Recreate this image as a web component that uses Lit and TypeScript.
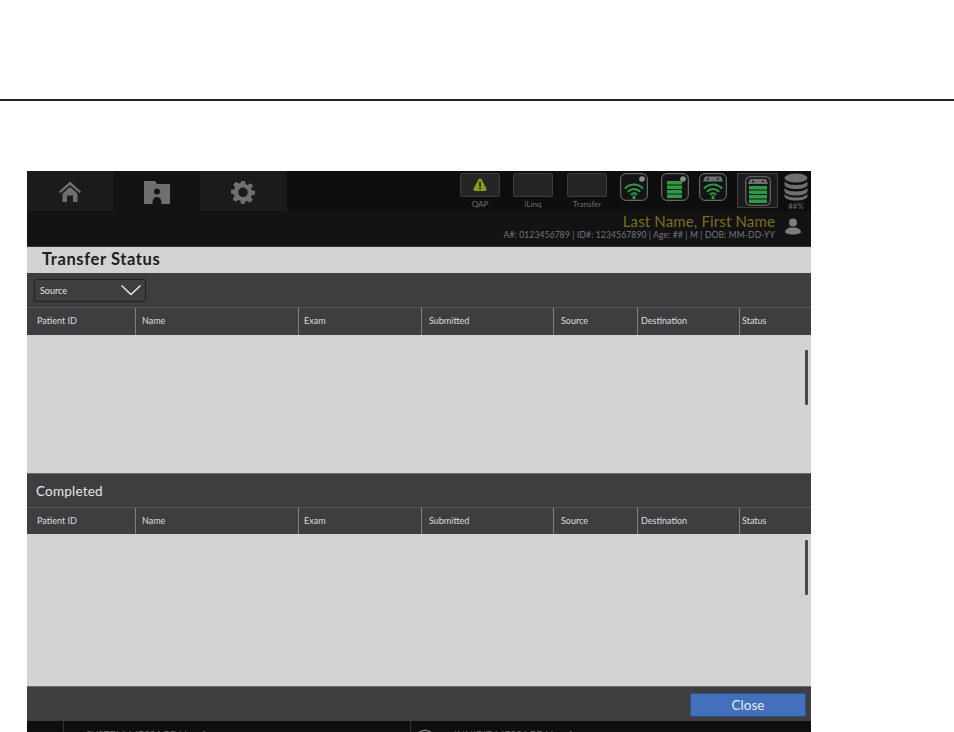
import { LitElement, html, css, svg } from "lit";
import { customElement } from "lit/decorators.js";

const cols = [
  ["Patient ID", 109], ["Name", 163], ["Exam", 123], ["Submitted", 132],
  ["Source", 84], ["Destination", 102], ["Status", 71],
] as const;

const wifi = svg`<g fill="none" stroke="#2f9a45" stroke-width="2" stroke-linecap="round"><path d="M5.500 15a12 12 0 0 1 17 0"/><path d="M8.500 18.300a7.800 7.800 0 0 1 11 0"/><path d="M11.500 21.200a3.600 3.600 0 0 1 5 0"/></g><rect x="12.600" y="22.500" width="2.800" height="3.500" fill="#2f9a45"/>`;
const bars = (x: number, y: number, w: number, n: number, h: number, gap: number) =>
  Array.from({ length: n }, (_, i) => svg`<rect x=${x} y=${y + i * (h + gap)} width=${w} height=${h} fill="#2f9a45"/>`);

@customElement("app-root")
export class AppRoot extends LitElement {
  static styles = css`
    :host { display: block; height: 732px; overflow: hidden; background: #fff; font-family: "Lato", "Liberation Sans", sans-serif; }
    .rule { height: 2px; background: #231f20; margin-top: 99px; }
    .screen { margin: 70px 143px 0 27px; width: 784px; }
    .top { height: 75px; background: #131316; border-bottom: 1px solid #3a3a3c; }
    .bar { display: flex; height: 40px; background: #0e0e0e; }
    .tab { width: 86.5px; height: 40px; box-sizing: border-box; padding-top: 2px; background: #1c1b1b; display: flex; align-items: center; justify-content: center; }
    .tab.on { background: #131316; }
    .status { margin-left: auto; display: flex; padding: 2px 0 0 0; }
    .qbtn { width: 40px; display: flex; flex-direction: column; align-items: center; margin-right: 14px; }
    .qbtn.first { margin-right: 13px; }
    .qbox { width: 40px; height: 24px; box-sizing: border-box; background: #252525; border: 1px solid #3d3d3d; border-radius: 2px; display: flex; align-items: center; justify-content: center; }
    .qlabel { font-size: 8px; line-height: 10px; margin-top: 2px; color: #6e6e6e; }
    .ico { display: block; flex: none; }
    .w1 { margin: 0 13px 0 -1px; }
    .w2 { margin-right: 10px; }
    .w3 { margin-right: 10px; }
    .sel { width: 41px; height: 35px; box-sizing: border-box; border: 1px solid #3f3f3f; background: #1c1c1c; display: flex; justify-content: center; align-items: center; margin-right: 5px; }
    .db { display: flex; flex-direction: column; align-items: center; width: 26px; margin-right: 2px; }
    .pct { font-size: 8px; line-height: 8px; color: #6e6e6e; margin-top: 1px; }
    .patient { display: flex; justify-content: flex-end; align-items: flex-start; height: 35px; padding-right: 8px; }
    .who { text-align: right; margin-right: 8px; }
    .name { font-size: 15px; line-height: 15px; letter-spacing: 0.15px; color: #7d6d1c; margin-top: 3px; }
    .sub { font-size: 8.5px; line-height: 10px; letter-spacing: 0.15px; color: #767676; margin-top: 1px; }
    .person { margin-top: 5px; }
    .title { height: 26px; background: #d2d2d2; color: #1e1e1e; font-size: 16.500px; font-weight: 700; line-height: 25px; padding-left: 15px; letter-spacing: 0.6px; }
    .tools { height: 34px; background: #3e3e40; box-sizing: border-box; padding: 6px 7px; }
    .select { width: 112px; height: 23px; box-sizing: border-box; border: 1px solid #232323; border-radius: 2px; background: #3e3e40; color: #e2e2e2; font-size: 9px; display: flex; align-items: center; justify-content: space-between; padding: 0 3px 1px 5px; }
    .chead { display: flex; height: 28px; background: #3e3e40; border-top: 1px solid #58585a; box-sizing: border-box; }
    .chead.two { height: 27px; }
    .col { box-sizing: border-box; border-right: 1px solid #808082; color: #dcdcdc; font-size: 9px; padding: 0 0 2px 6px; display: flex; align-items: center; }
    .col:last-child { border-right: 0; padding-left: 2px; }
    .col.c0 { padding-left: 10px; }
    .col.c2 { padding-left: 5px; }
    .col.c3 { padding-left: 7px; }
    .col.c4 { padding-left: 7px; }
    .col.c5 { padding-left: 3px; }
    .list { background: #d2d2d2; position: relative; }
    .thumb { position: absolute; right: 3px; width: 3px; height: 55px; background: #48484a; border-radius: 1px; }
    .a { height: 138px; }
    .a .thumb { top: 15px; }
    .b { height: 152px; }
    .b .thumb { top: 6px; }
    .sect { height: 34px; background: #3e3e40; border-top: 1px solid #6a6a6a; box-sizing: border-box; color: #e6e6e6; font-size: 13.500px; line-height: 35px; padding-left: 9px; letter-spacing: 0.2px; }
    .foot { height: 35px; background: #3e3e40; border-top: 1px solid #6a6a6a; box-sizing: border-box; display: flex; justify-content: flex-end; align-items: flex-start; padding: 6px 5px 0 0; }
    .close { width: 116px; height: 24px; box-sizing: border-box; background: #4370bd; border: 1px solid #2f4f86; border-radius: 2px; color: #e8e8e8; font-size: 13.500px; display: flex; align-items: center; justify-content: center; font-family: inherit; padding: 0; }
    .msgs { height: 11px; overflow: hidden; background: #0f0f0e; display: flex; color: #6e6e6e; font-size: 10px; line-height: 11px; letter-spacing: 0.3px; }
    .m1 { width: 348px; margin-left: 36px; border-left: 1px solid #333; border-right: 1px solid #333; box-sizing: border-box; padding: 7.500px 0 0 16px; white-space: nowrap; }
    .m2 { padding: 7.500px 0 0 37px; white-space: nowrap; position: relative; }
    .eye { position: absolute; left: 5px; top: 8px; }
  `;

  private cols(two = false) {
    return html`<div class="chead ${two ? "two" : ""}">
      ${cols.map(([t, w], i) => html`<div class="col c${i}" style="width:${w}px">${t}</div>`)}
    </div>`;
  }

  render() {
    return html`
      <div class="rule"></div>
      <div class="screen">
        <div class="top">
          <div class="bar">
            <div class="tab">
              <svg class="ico" width="24" height="24" viewBox="0 0 24 24"><path fill="#6f6f6f" d="M12 1.500 23 11.500l-1.200 1.700L12 5 2.200 13.200 1 11.500zM4.500 13.500 12 7l7.500 6.500V22h-4.500v-6.500H9V22H4.500z"/></svg>
            </div>
            <div class="tab on">
              <svg class="ico" width="28" height="24" viewBox="0 0 28 24"><path fill="#6f6f6f" fill-rule="evenodd" d="M1 1h11l2 3h13v20H18.500c0-4-1-7-4.500-7s-4.500 3-4.500 7H1zM14 8.500a3 3 0 1 0 0 6 3 3 0 0 0 0-6z"/></svg>
            </div>
            <div class="tab">
              <svg class="ico" width="24" height="24" viewBox="0 0 24 24"><path fill="#6f6f6f" fill-rule="evenodd" d="M10 1h4l.7 3.200 2 .8 2.800-1.800 2.800 2.800L20 8.300l.8 2L24 11v3.500l-3.200.700-.8 2 1.800 2.800-2.800 2.800-2.800-1.800-2 .8L13.500 24H10l-.7-3.200-2-.8-2.800 1.800L1.700 19 3.500 16.200l-.8-2L0 13.500V10l3.200-.7.800-2L2.200 4.500 5 1.700 7.800 3.500l2-.8zM12 7.500a4.800 4.800 0 1 0 0 9.600 4.800 4.800 0 0 0 0-9.600z"/></svg>
            </div>
            <div class="status">
              <div class="qbtn first">
                <div class="qbox">
                  <svg class="ico" width="16" height="16" viewBox="0 0 16 16"><path d="M8 1.500c1 0 1.500.8 2 1.700l4.200 8c.7 1.400.1 2.800-1.500 2.800H3.300c-1.600 0-2.200-1.400-1.500-2.800L6 3.200c.5-.9 1-1.700 2-1.700z" fill="#8c9b1e"/><rect x="7.200" y="4.800" width="1.700" height="5" fill="#1c1c1c"/><rect x="7.200" y="10.800" width="1.700" height="1.700" fill="#1c1c1c"/></svg>
                </div>
                <div class="qlabel">QAP</div>
              </div>
              <div class="qbtn"><div class="qbox"></div><div class="qlabel">iLinq</div></div>
              <div class="qbtn"><div class="qbox"></div><div class="qlabel">Transfer</div></div>
              <svg class="ico w1" width="28" height="28" viewBox="0 0 28 28"><rect x=".7" y=".7" width="26.600" height="26.600" rx="5" fill="#141414" stroke="#7c7c7c"/><circle cx="22" cy="6" r="2.800" fill="#8c8c8c"/>${wifi}</svg>
              <svg class="ico w2" width="28" height="28" viewBox="0 0 28 28"><rect x=".7" y=".7" width="26.600" height="26.600" rx="5" fill="#141414" stroke="#7c7c7c"/><circle cx="22" cy="6" r="2.800" fill="#8c8c8c"/>${bars(6, 8, 15, 4, 3.500, 1)}</svg>
              <svg class="ico w3" width="28" height="28" viewBox="0 0 28 28"><rect x=".7" y=".7" width="26.600" height="26.600" rx="5" fill="#141414" stroke="#7c7c7c"/><path d="M6 3.500h16l2 5H4z" fill="#6f6f6f"/><circle cx="9" cy="6" r="1" fill="#141414"/><circle cx="19" cy="6" r="1" fill="#141414"/>${wifi}</svg>
              <div class="sel">
                <svg class="ico" width="26" height="30" viewBox="0 0 26 30"><rect x=".8" y=".8" width="24.400" height="28.400" rx="4" fill="#161616" stroke="#7c7c7c"/><path d="M5 3h16l2 5H3z" fill="#6f6f6f"/><circle cx="8" cy="5.500" r="1" fill="#161616"/><circle cx="18" cy="5.500" r="1" fill="#161616"/>${bars(4, 10, 18, 4, 3.500, 1)}</svg>
              </div>
              <div class="db">
                <svg class="ico" width="24" height="28" viewBox="0 0 24 28"><g fill="#6e6e6e"><ellipse cx="12" cy="5" rx="11.500" ry="4.500"/><path d="M.5 8.500c2 2.500 6 3.500 11.500 3.500s9.500-1 11.500-3.500V12c-1 2.500-5.500 4-11.500 4S1.500 14.500.5 12z"/><path d="M.5 15c2 2.500 6 3.500 11.500 3.500s9.500-1 11.500-3.500v3.500c-1 2.500-5.500 4-11.500 4S1.500 21 .5 18.500z"/><path d="M.5 21c2 2.500 6 3.500 11.500 3.500s9.500-1 11.500-3.500v2.500c-1 2.500-5.500 4-11.500 4S1.500 26 .5 23.500z"/></g></svg>
                <div class="pct">##%</div>
              </div>
            </div>
          </div>
          <div class="patient">
            <div class="who">
              <div class="name">Last Name, First Name</div>
              <div class="sub">A#: 0123456789 | ID#: 1234567890 | Age: ## | M | DOB: MM-DD-YY</div>
            </div>
            <svg class="ico person" width="20" height="20" viewBox="0 0 20 20"><circle cx="10" cy="6.500" r="4" fill="#7c7c7c"/><path d="M2 16.500c0-3 3-4.500 5.500-5h5c2.500.5 5.500 2 5.500 5-2 1.500-5 2-8 2s-6-.5-8-2z" fill="#7c7c7c"/></svg>
          </div>
        </div>
        <div class="title">Transfer Status</div>
        <div class="tools">
          <div class="select">
            <span>Source</span>
            <svg class="ico" width="22" height="12" viewBox="0 0 22 12"><path d="M1.500 1.500 11 10.500l9.500-9" fill="none" stroke="#e8e8e8" stroke-width="1.500"/></svg>
          </div>
        </div>
        ${this.cols()}
        <div class="list a"><div class="thumb"></div></div>
        <div class="sect">Completed</div>
        ${this.cols(true)}
        <div class="list b"><div class="thumb"></div></div>
        <div class="foot"><button class="close">Close</button></div>
        <div class="msgs">
          <div class="m1">&lt;SYSTEM MESSAGE Line 1&gt;</div>
          <div class="m2">
            <svg class="eye" width="18" height="10" viewBox="0 0 18 10"><path d="M1 5c2.500-2.500 5-3.800 8-3.800S14.500 2.500 17 5" fill="none" stroke="#777" stroke-width="1.500"/></svg>
            &lt;INHIBIT MESSAGE Line 1&gt;
          </div>
        </div>
      </div>
    `;
  }
}
